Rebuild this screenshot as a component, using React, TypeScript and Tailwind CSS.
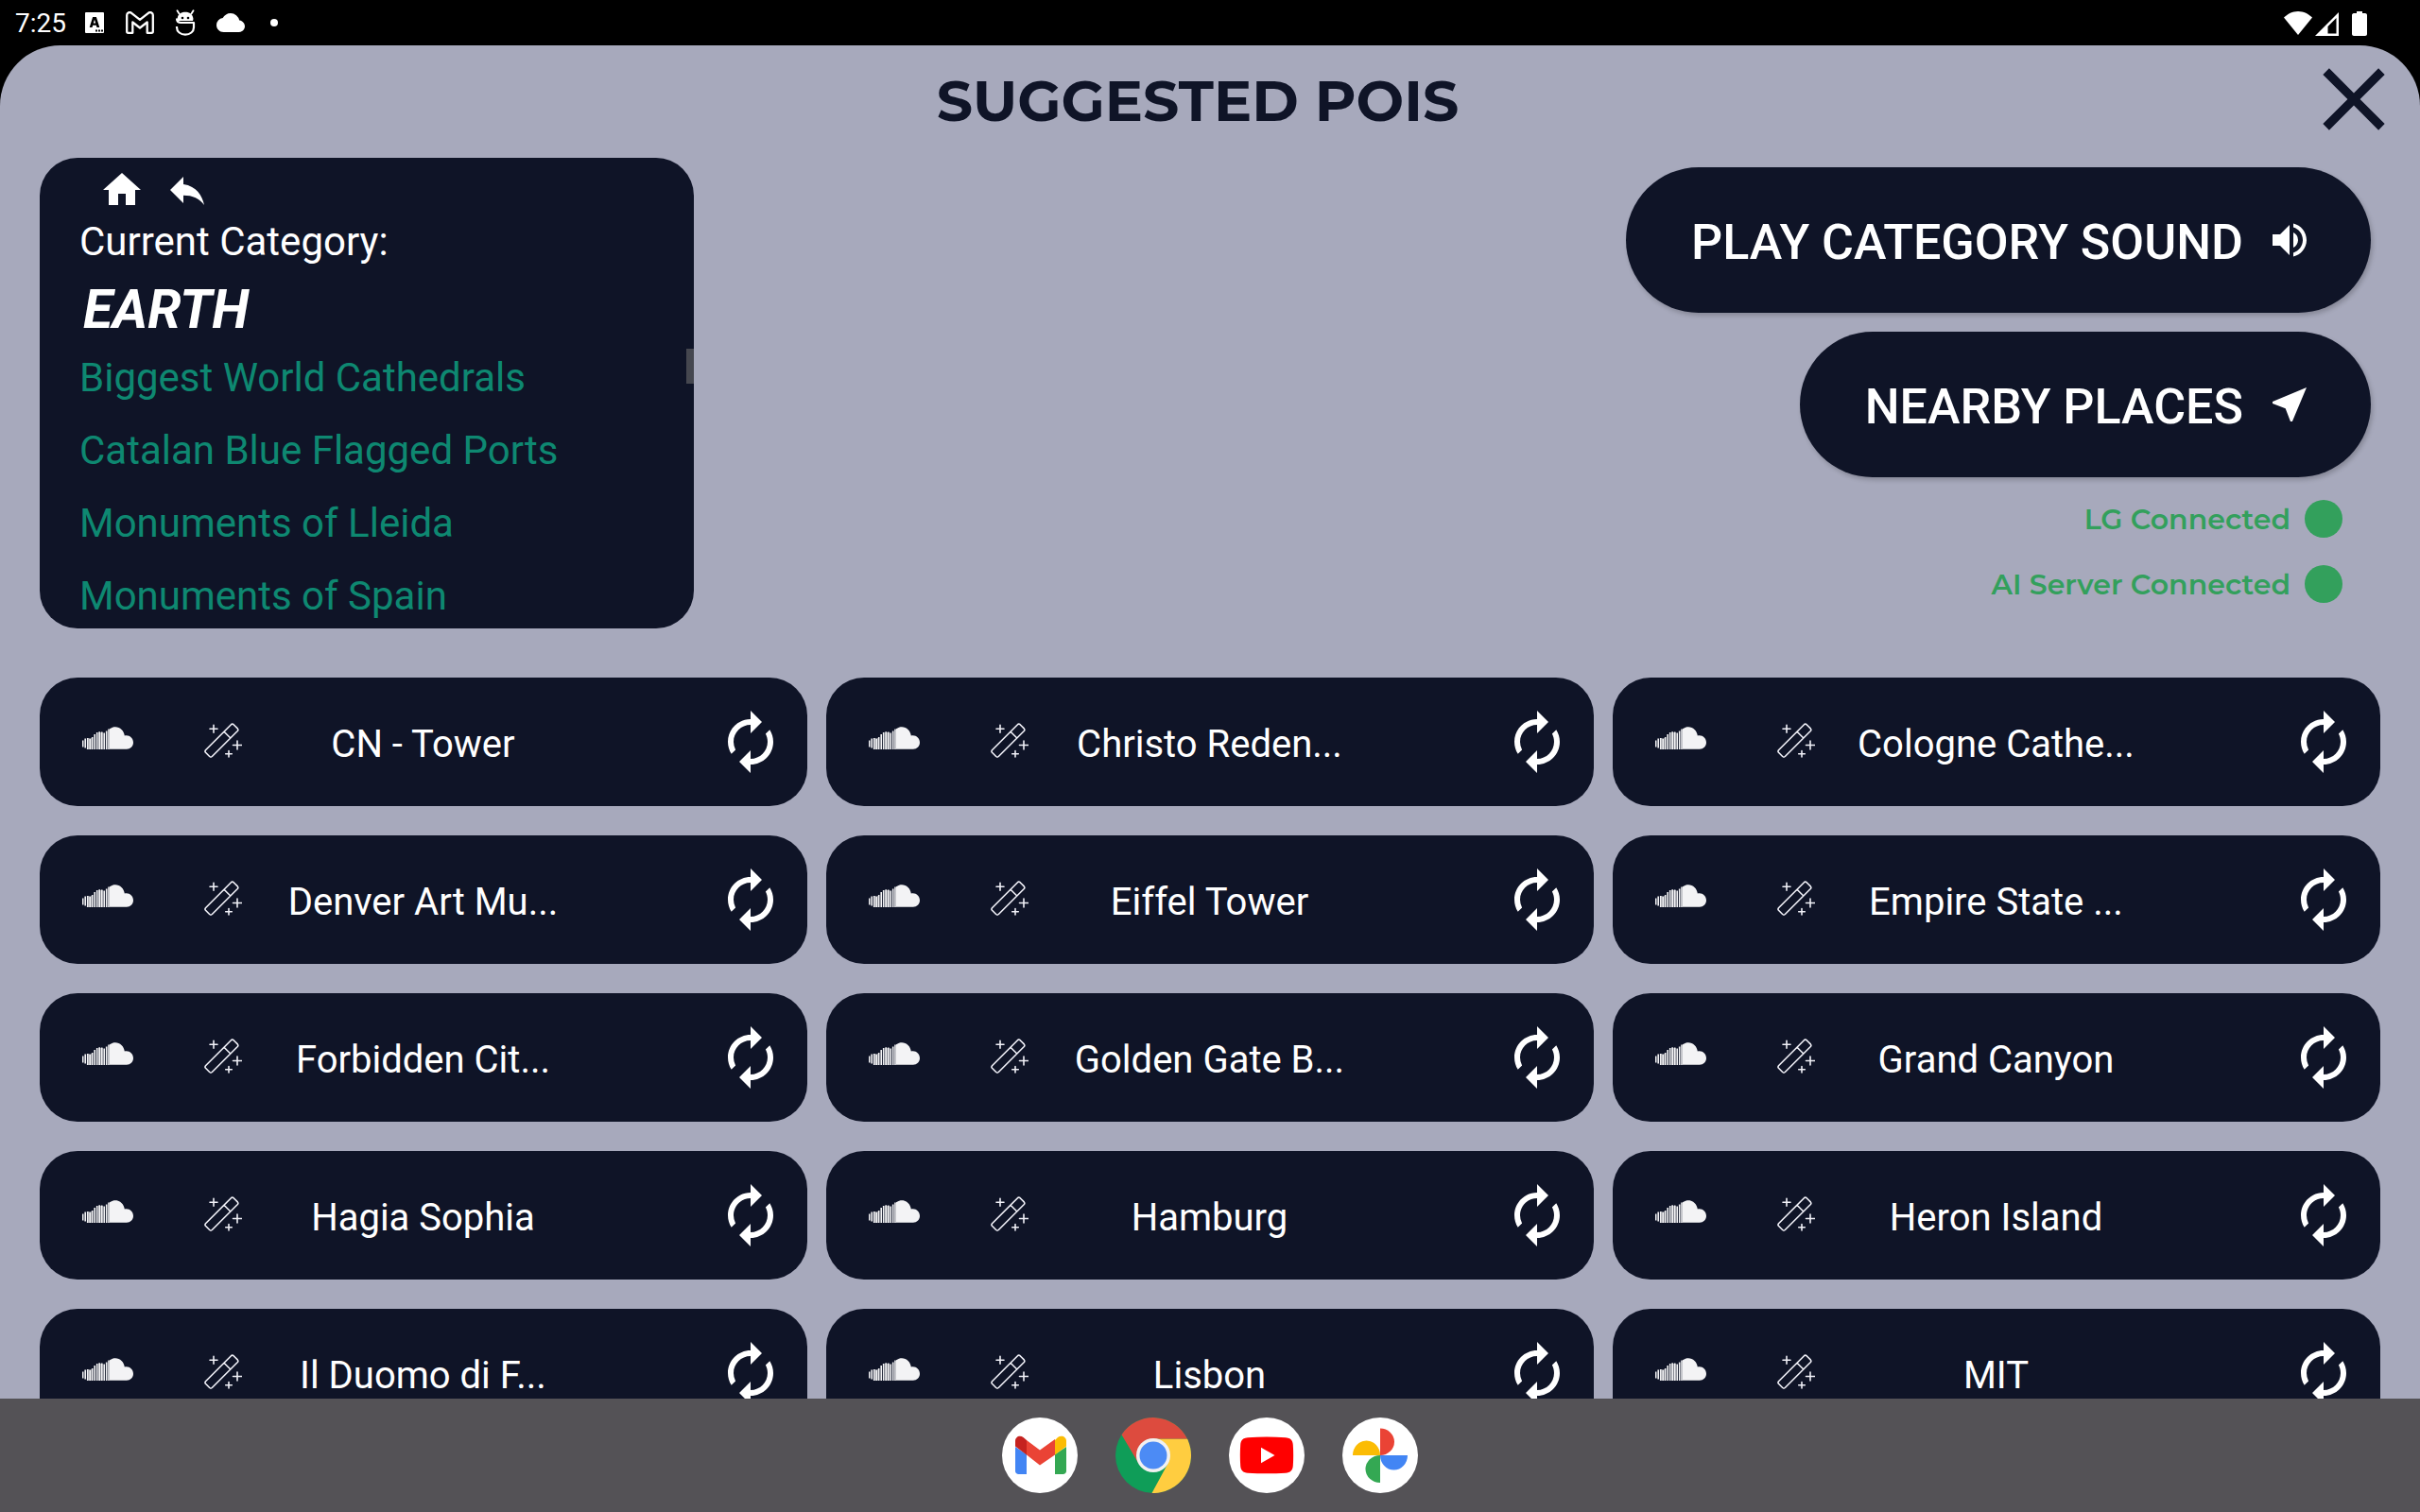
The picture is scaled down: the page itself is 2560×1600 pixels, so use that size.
import React from "react";
import {
  MdAutorenew,
  MdClose,
  MdCloud,
  MdHome,
  MdNearMe,
  MdReply,
  MdVolumeUp,
} from "react-icons/md";

const categories = [
  "Biggest World Cathedrals",
  "Catalan Blue Flagged Ports",
  "Monuments of Lleida",
  "Monuments of Spain",
];

const places = [
  "CN - Tower",
  "Christo Reden...",
  "Cologne Cathe...",
  "Denver Art Mu...",
  "Eiffel Tower",
  "Empire State ...",
  "Forbidden Cit...",
  "Golden Gate B...",
  "Grand Canyon",
  "Hagia Sophia",
  "Hamburg",
  "Heron Island",
  "Il Duomo di F...",
  "Lisbon",
  "MIT",
];

function StatusBar() {
  return (
    <div className="flex h-12 shrink-0 items-center justify-between bg-black pl-4 pr-14 text-white">
      <div className="flex items-center">
        <span className="pt-0.5 text-[28px] leading-8">7:25</span>
        <svg className="ml-5 h-[22px] w-5" viewBox="0 0 20 22" aria-hidden="true">
          <rect width="20" height="22" rx="1" fill="#fff" />
          <path
            d="M8.100 5h3.800l3.400 11h-2.800l-.7-2.300H8.200L7.500 16H4.700zM10 7.800l-1.200 3.800h2.400z"
            fill="#000"
            fillRule="evenodd"
          />
          <path d="M11 18.500h2v2h-2zM14 18.500h2v2h-2zM17 18.500h2v2h-2z" fill="#000" />
        </svg>
        <svg className="ml-[23px] h-6 w-[30px]" viewBox="0 0 30 24" fill="none" aria-hidden="true">
          <path
            d="M1.200 4v17.300c0 .9.600 1.500 1.500 1.500h4.600V11.500L15 17.500l7.700-6v11.300h4.600c.9 0 1.500-.6 1.500-1.500V4c0-2.600-3-3.700-4.900-2.200L15 8.800 6.100 1.800C4.200.3 1.200 1.400 1.200 4z"
            stroke="#fff"
            strokeWidth="2.300"
            strokeLinejoin="round"
          />
        </svg>
        <svg className="ml-[22px] h-7 w-[22px]" viewBox="0 0 22 28" fill="none" aria-hidden="true">
          <path d="M4.500 4.500 2.500 1.200M17.500 4.500l2-3.300" stroke="#fff" strokeWidth="1.800" strokeLinecap="round" />
          <path d="M3 8C4.500 1 17.500 1 19 8c.8 2 .3 3 0 4H3c-.5-1-.8-2 0-4z" fill="#fff" />
          <circle cx="8" cy="9" r="1.300" fill="#000" />
          <circle cx="14" cy="9" r="1.300" fill="#000" />
          <path
            d="M2 9.500C2 12.500 3.500 14 6.500 14H20v5c0 4.500-4 7.600-9 7.600S2 23.500 2 19v-1"
            stroke="#fff"
            strokeWidth="2.200"
            strokeLinejoin="round"
          />
        </svg>
        <MdCloud className="ml-[22px] size-[30px]" aria-hidden="true" />
        <span className="ml-[27px] size-2 rounded-full bg-white" />
      </div>
      <svg className="h-7 w-[90px]" viewBox="0 0 90 28" fill="#fff" aria-hidden="true">
        <path d="M2 8.500C6 4.800 11 2 17 2s11 2.800 15 6.500L17 27z" />
        <path d="M60 3v25H35zM57.500 9 48.500 18v7.500h9z" fillRule="evenodd" />
        <path d="M79 2h6v2h3c1 0 2 .8 2 2v20c0 1-.8 2-2 2H76c-1 0-2-.8-2-2V6c0-1 .8-2 2-2h3z" />
      </svg>
    </div>
  );
}

function SoundCloudIcon() {
  return (
    <svg className="h-6 w-[54px]" viewBox="0 0 54 24" fill="#f3f3f5" aria-hidden="true">
      <path d="M29 2.300C31 .8 33 .2 35 .2c5 0 9.200 4 9.800 9.400C49.700 8.400 54 12 54 16.800c0 4-3.200 7-7 7H29z" />
      <path d="M5 12h6v12H5zM17 6h5v18h-5z" fillOpacity="0.450" />
      <path
        d="M.7 14.500v7M3.200 12.500v10M5.700 12V24M8.200 13v11M10.700 11v13M13.200 8v16M15.700 6v18M18.200 5.200V24M20.700 5.500V24M23.200 6.500V24M25.700 4.500V24M28 2.500V24"
        stroke="#f3f3f5"
        strokeWidth="1.600"
      />
    </svg>
  );
}

function WandIcon() {
  return (
    <svg
      className="h-[38px] w-10"
      viewBox="0 0 40 38"
      fill="none"
      stroke="#f1f1f8"
      strokeWidth="1.600"
      strokeLinecap="round"
      strokeLinejoin="round"
      aria-hidden="true"
    >
      <path d="M28.500 1.700q1.300-1.100 2.600 0l4.200 4.200q1.100 1.300 0 2.600L8.300 35.500q-1.300 1.100-2.600 0L1.500 31.300q-1.100-1.300 0-2.600zM21 9.200l6.800 6.800M10 2.200v8M6 6.200h8M35 19v9M30.500 23.500h9M26 29.500v6.500M22.700 32.700h6.600" />
    </svg>
  );
}

function PlaceCard({ name }: { name: string }) {
  return (
    <article className="grid h-[136px] grid-cols-[1fr_auto_1fr] items-center rounded-[40px] bg-[#0f1427] pl-[45px] pr-6 text-white">
      <div className="flex items-center gap-[75px]">
        <button type="button" className="pb-2" aria-label={`Play sound of ${name}`}>
          <SoundCloudIcon />
        </button>
        <button type="button" className="pb-0.5" aria-label={`Generate content for ${name}`}>
          <WandIcon />
        </button>
      </div>
      <h2 className="-ml-[22px] whitespace-nowrap pt-1.5 text-[40px] leading-[48px]">{name}</h2>
      <button type="button" className="justify-self-end" aria-label={`Orbit ${name}`}>
        <MdAutorenew className="size-[72px]" />
      </button>
    </article>
  );
}

function Connection({ label }: { label: string }) {
  return (
    <div className="flex items-center gap-[15px] font-['Montserrat',Inter,sans-serif] text-[30px] font-semibold leading-10 text-[#33a05c]">
      <span className="pt-0.5">{label}</span>
      <span className="size-10 rounded-full bg-[#33a05c]" />
    </div>
  );
}

function Dock() {
  return (
    <nav className="flex h-[120px] shrink-0 items-center justify-center gap-10 bg-[#545256]">
      <button type="button" aria-label="Gmail" className="size-20">
        <svg viewBox="0 0 80 80" aria-hidden="true">
          <circle cx="40" cy="40" r="40" fill="#fff" />
          <path d="M14 31v25.500c0 2 1.500 3.500 3.500 3.500H26V39z" fill="#4285f4" />
          <path d="M56 60h8.500c2 0 3.500-1.500 3.500-3.500V31l-12 8z" fill="#34a853" />
          <path d="M56 24v15.500l12-9V25c0-5-5.400-6.800-9-4z" fill="#fbbc04" />
          <path d="M26 39.500V24l14 10.500L56 23v16.500L40 50.500z" fill="#ea4335" />
          <path d="M14 25v5.500l12 9V24l-3.500-3C19 18.200 14 20 14 25z" fill="#c5221f" />
        </svg>
      </button>
      <button type="button" aria-label="Chrome" className="size-20">
        <svg viewBox="0 0 80 80" aria-hidden="true">
          <circle cx="40" cy="40" r="40" fill="#0f9d58" />
          <path d="M6.500 18.200A40 40 0 0 1 76.100 22.800H40L24.700 49z" fill="#dd4b3e" />
          <path d="M76.100 22.800A40 40 0 0 1 38.500 80L55.300 49 40 22.800z" fill="#ffcd40" />
          <circle cx="40" cy="40" r="18" fill="#f1f1f1" />
          <circle cx="40" cy="40" r="14.500" fill="#4c8bf5" />
        </svg>
      </button>
      <button type="button" aria-label="YouTube" className="size-20">
        <svg viewBox="0 0 80 80" aria-hidden="true">
          <circle cx="40" cy="40" r="40" fill="#fff" />
          <path
            d="M20 21.300c13-1 27-1 40 0 5 .4 7.500 2.500 7.800 7.700.5 7.500.5 14.500 0 22-.3 5-2.800 7.300-7.800 7.700-13 .8-27 .8-40 0-5-.4-7.500-2.700-7.800-7.700-.5-7.500-.5-14.500 0-22 .3-5.200 2.800-7.300 7.800-7.700z"
            fill="#f00"
          />
          <path d="M34 31.800v16.400L48.500 40z" fill="#fff" />
        </svg>
      </button>
      <button type="button" aria-label="Photos" className="size-20">
        <svg viewBox="0 0 80 80" aria-hidden="true">
          <circle cx="40" cy="40" r="40" fill="#fff" />
          <path d="M40 11.500a15 14.250 0 0 1 0 28.500z" fill="#ea4335" />
          <path d="M69 40a14.500 15.500 0 0 1-29 0z" fill="#4285f4" />
          <path d="M40 69a15.500 14.500 0 0 1 0-29z" fill="#34a853" />
          <path d="M11 40a14.500 15.500 0 0 1 29 0z" fill="#fbbc04" />
        </svg>
      </button>
    </nav>
  );
}

export default function App() {
  return (
    <div className="flex h-screen flex-col overflow-hidden bg-black font-[Roboto,sans-serif]">
      <StatusBar />
      <main className="flex min-h-0 flex-1 flex-col overflow-hidden rounded-t-[64px] bg-[#a7a9bc]">
        <header className="flex h-[114px] shrink-0 items-center pl-[100px] pr-[14px] text-[#0f1427]">
          <h1 className="flex-1 pt-1 text-center font-['Montserrat',Inter,sans-serif] text-[60px] font-bold leading-[72px]">
            SUGGESTED POIS
          </h1>
          <button type="button" aria-label="Close">
            <MdClose className="size-28" />
          </button>
        </header>

        <section className="flex shrink-0 items-start justify-between px-[42px] pt-[5px]">
          <div className="relative h-[498px] w-[692px] overflow-hidden rounded-[40px] bg-[#0f1427] px-[42px] pt-[10px] text-white">
            <div className="flex gap-[21px] pl-[21px]">
              <button type="button" aria-label="Home">
                <MdHome className="size-12" />
              </button>
              <button type="button" aria-label="Back">
                <MdReply className="size-12" />
              </button>
            </div>
            <p className="mt-[5px] text-[42px] leading-[52px]">Current Category:</p>
            <h2 className="mt-[13px] pl-1 text-[57px] font-bold italic leading-[66px]">EARTH</h2>
            <ul className="text-[42px] leading-[77px] text-[#0e8871]">
              {categories.map((c) => (
                <li key={c}>
                  <a href="#category">{c}</a>
                </li>
              ))}
            </ul>
            <span className="absolute right-0 top-[202px] h-[37px] w-2 bg-[#45474f]" />
          </div>

          <div className="flex flex-col items-end pr-[10px] pt-[10px]">
            <button
              type="button"
              className="flex h-[154px] items-center gap-[25px] rounded-full bg-[#0f1427] pl-[69px] pr-[62px] text-[52px] font-medium text-white shadow-[2px_3px_5px_rgba(0,0,0,0.200)]"
            >
              <span className="pt-1.5">PLAY CATEGORY SOUND</span>
              <MdVolumeUp className="size-12" />
            </button>
            <button
              type="button"
              className="mt-5 flex h-[154px] items-center gap-[25px] rounded-full bg-[#0f1427] pl-[69px] pr-[62px] text-[52px] font-medium text-white shadow-[2px_3px_5px_rgba(0,0,0,0.200)]"
            >
              <span className="pt-1.5">NEARBY PLACES</span>
              <MdNearMe className="size-12" />
            </button>
            <div className="mt-[23px] flex flex-col items-end gap-[27px] pr-[30px]">
              <Connection label="LG Connected" />
              <Connection label="AI Server Connected" />
            </div>
          </div>
        </section>

        <section className="mt-[52px] grid min-h-0 flex-1 grid-cols-3 content-start gap-x-5 gap-y-[31px] overflow-hidden px-[42px]">
          {places.map((p) => (
            <PlaceCard key={p} name={p} />
          ))}
        </section>
      </main>
      <Dock />
    </div>
  );
}
